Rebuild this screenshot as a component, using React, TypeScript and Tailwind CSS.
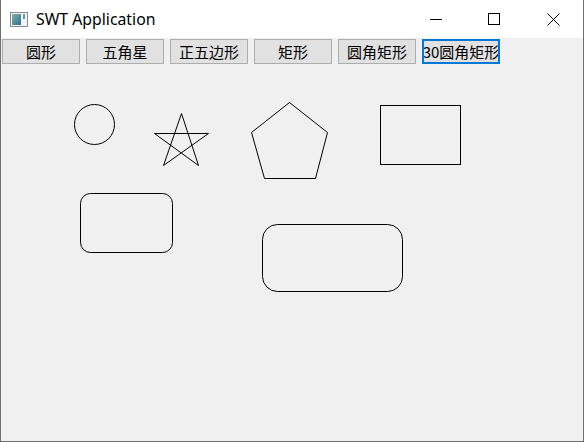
import React from "react";

const labels = ["圆形", "五角星", "正五边形", "矩形", "圆角矩形", "30圆角矩形"];

function AppIcon() {
    return (
        <svg width="18" height="15" viewBox="0 0 18 15" className="shrink-0">
            <rect x="0.5" y="0.5" width="17" height="14" fill="#f4f4f4" stroke="#8a8a8a" />
            <defs>
                <linearGradient id="g" x1="0" y1="0" x2="1" y2="1">
                    <stop offset="0" stopColor="#7fb3a8" />
                    <stop offset="1" stopColor="#2f6f8f" />
                </linearGradient>
            </defs>
            <rect x="2" y="2" width="9" height="11" fill="url(#g)" />
            <rect x="13" y="2" width="2" height="5" fill="#5aa0b0" />
        </svg>
    );
}

export default function App() {
    return (
        <div className="w-[584px] h-[442px] flex flex-col bg-white border-l border-r border-b border-[#6f6f6f] overflow-hidden">
            <div className="h-[38px] shrink-0 flex items-center bg-white">
                <div className="pl-[9px] pr-[8px] pt-[1px] flex items-center">
                    <AppIcon />
                </div>
                <span className="pt-[2px] text-[15.8px] text-black font-['Noto_Sans',sans-serif] leading-none">
                    SWT Application
                </span>
                <div className="ml-auto flex items-center h-full">
                    <div className="w-[58px] h-full flex items-center justify-center">
                        <svg width="12" height="12" viewBox="0 0 12 12">
                            <line x1="0" y1="6.5" x2="12" y2="6.5" stroke="#000" strokeWidth="1" />
                        </svg>
                    </div>
                    <div className="w-[58px] h-full flex items-center justify-center">
                        <svg width="12" height="12" viewBox="0 0 12 12">
                            <rect x="0.5" y="0.5" width="11" height="11" fill="none" stroke="#000" />
                        </svg>
                    </div>
                    <div className="w-[60px] h-full flex items-center justify-center">
                        <svg width="13" height="13" viewBox="0 0 13 13">
                            <path d="M0.5 0.5 L12.5 12.5 M12.5 0.5 L0.5 12.5" stroke="#000" strokeWidth="1" />
                        </svg>
                    </div>
                </div>
            </div>

            <div className="flex-1 flex flex-col bg-[#f0f0f0]">
                <div className="flex gap-[6px] pl-[1px] pt-[1px] h-[26px] shrink-0">
                    {labels.map((label, i) => (
                        <div
                            key={label}
                            className={`w-[78px] h-[25px] flex items-center justify-center overflow-hidden bg-[#e1e1e1] text-black text-[15px] leading-none font-['Noto_Sans_CJK_SC',sans-serif] whitespace-nowrap ${
                                i === 5 ? "border-2 border-[#0078d7]" : "border border-[#adadad]"
                            }`}
                        >
                            <span className="shrink-0">{label}</span>
                        </div>
                    ))}
                </div>

                <svg width="582" height="377" viewBox="1 64 582 377" className="block">
                    <g fill="none" stroke="#000" strokeWidth="1">
                        <circle cx="94.5" cy="124.5" r="20" />
                        <polyline points="181.5,113.5 163.5,165.5 208.5,133.5 154.5,133.5 198.5,165.5 181.5,113.5" />
                        <polygon points="289.5,102.5 327.5,132.5 315.5,178.5 264.5,178.5 251.5,132.5" />
                        <rect x="380.5" y="105.5" width="80" height="59" shapeRendering="crispEdges" />
                        <rect x="80.5" y="193.5" width="92" height="59" rx="10" ry="10" />
                        <rect x="262.5" y="224.5" width="140" height="67" rx="15" ry="15" />
                    </g>
                </svg>
            </div>
        </div>
    );
}
